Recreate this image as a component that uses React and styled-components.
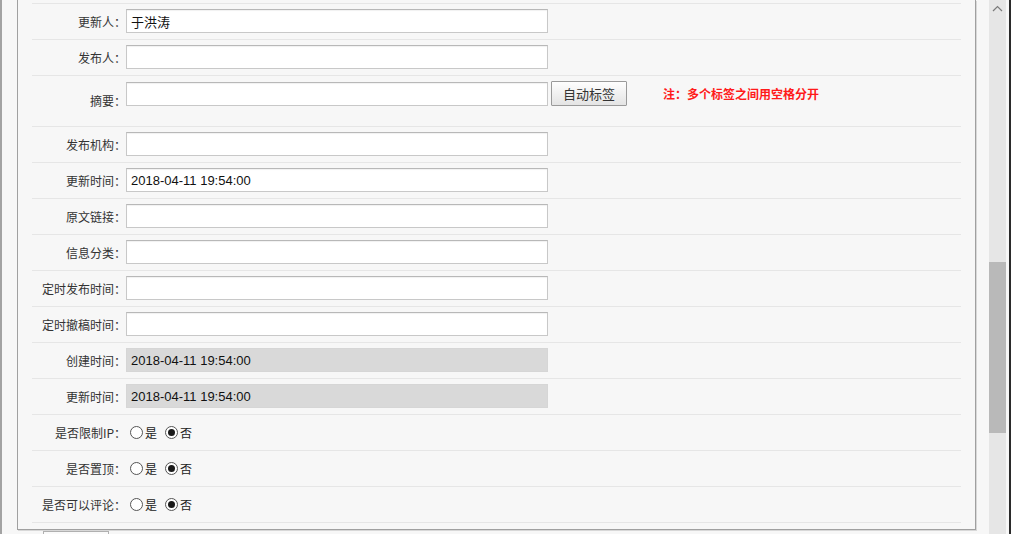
import React from "react";
import styled, { createGlobalStyle } from "styled-components";

const GlobalStyle = createGlobalStyle`
  html, body {
    margin: 0;
    padding: 0;
    background: #f7f7f7;
  }
  * {
    box-sizing: border-box;
  }
`;

const CJK = `"Noto Sans CJK SC", "Liberation Sans", sans-serif`;
const LATIN = `"Liberation Sans", "Noto Sans CJK SC", sans-serif`;

const fields = [
  { label: "更新人：", value: "于洪涛" },
  { label: "发布人：", value: "" },
  { label: "摘要：", type: "summary" },
  { label: "发布机构：", value: "" },
  { label: "更新时间：", value: "2018-04-11 19:54:00" },
  { label: "原文链接：", value: "" },
  { label: "信息分类：", value: "" },
  { label: "定时发布时间：", value: "" },
  { label: "定时撤稿时间：", value: "" },
  { label: "创建时间：", value: "2018-04-11 19:54:00", disabled: true },
  { label: "更新时间：", value: "2018-04-11 19:54:00", disabled: true },
  { label: "是否限制IP：", type: "radio" },
  { label: "是否置顶：", type: "radio" },
  { label: "是否可以评论：", type: "radio" },
];

const App = () => {
  return (
    <>
      <GlobalStyle />
      <Screen>
        <LeftEdge />
        <Main>
          <Panel>
            <FormList>
              {fields.map((f, i) => (
                <Row key={i} $tall={f.type === "summary"}>
                  <Label>{f.label}</Label>
                  {f.type === "summary" ? (
                    <FieldCell $top>
                      <TextInput defaultValue="" />
                      <TagButton type="button">自动标签</TagButton>
                      <Note>注：多个标签之间用空格分开</Note>
                    </FieldCell>
                  ) : f.type === "radio" ? (
                    <FieldCell>
                      <RadioItem>
                        <RadioMark />是
                      </RadioItem>
                      <RadioItem>
                        <RadioMark $checked />否
                      </RadioItem>
                    </FieldCell>
                  ) : (
                    <FieldCell>
                      <TextInput
                        defaultValue={f.value}
                        disabled={f.disabled}
                        $disabled={f.disabled}
                      />
                    </FieldCell>
                  )}
                </Row>
              ))}
            </FormList>
          </Panel>
          <Footer>
            <FooterButton type="button" aria-label="保存" />
          </Footer>
        </Main>
        <ScrollBar>
          <ScrollUp>
            <svg width="11" height="7" viewBox="0 0 11 7">
              <path d="M1 6 L5.5 1.5 L10 6" fill="none" stroke="#7a7a7a" strokeWidth="1.2" />
            </svg>
          </ScrollUp>
          <ScrollThumb />
        </ScrollBar>
        <RightEdge />
      </Screen>
    </>
  );
};

const Screen = styled.div`
  display: flex;
  height: 534px;
  width: 1011px;
  overflow: hidden;
  background: #f7f7f7;
`;

const LeftEdge = styled.div`
  width: 2px;
  flex-shrink: 0;
  background: #a3a3a3;
`;

const Main = styled.div`
  width: 959px;
  flex-shrink: 0;
  margin-left: 15px;
  display: flex;
  flex-direction: column;
`;

const Panel = styled.div`
  background: #f7f7f7;
  border: 1px solid #a0a0a0;
  border-top: none;
  box-shadow: 1px 1px 0 #d8d8d8;
  padding: 3px 14px 6px;
`;

const FormList = styled.div`
  display: flex;
  flex-direction: column;
  border-bottom: 1px solid #e6e6e6;
`;

const Row = styled.div`
  display: flex;
  align-items: center;
  height: ${(p) => (p.$tall ? "51px" : "36px")};
  border-top: 1px solid #e6e6e6;
`;

const Label = styled.div`
  width: 94px;
  flex-shrink: 0;
  margin-top: -1px;
  text-align: right;
  font-family: ${CJK};
  font-size: 12px;
  color: #333;
  white-space: nowrap;
`;

const FieldCell = styled.div`
  display: flex;
  align-items: ${(p) => (p.$top ? "flex-start" : "center")};
  align-self: ${(p) => (p.$top ? "flex-start" : "center")};
  padding-top: ${(p) => (p.$top ? "6px" : "0")};
  margin-top: ${(p) => (p.$top ? "0" : "-1px")};
`;

const TextInput = styled.input`
  width: 422px;
  height: 24px;
  padding: 0 4px;
  border: 1px solid #c8c8c8;
  border-top-color: #b8b8b8;
  box-shadow: inset 0 1px 1px rgba(0, 0, 0, 0.06);
  background: ${(p) => (p.$disabled ? "#d9d9d9" : "#fff")};
  color: #111;
  font-family: ${LATIN};
  font-size: 13px;
  outline: none;
  &:disabled {
    color: #111;
    border-color: #d6d6d6;
    box-shadow: none;
  }
`;

const TagButton = styled.button`
  margin-left: 3px;
  margin-top: -1px;
  width: 76px;
  height: 25px;
  padding: 0;
  border: 1px solid #9a9a9a;
  border-radius: 1px;
  background: linear-gradient(#fefefe, #e4e4e4);
  font-family: ${CJK};
  font-size: 13px;
  color: #333;
`;

const Note = styled.span`
  margin-left: 36px;
  line-height: 24px;
  font-family: ${CJK};
  font-size: 12px;
  font-weight: bold;
  color: #ff1a1a;
`;

const RadioItem = styled.label`
  display: flex;
  align-items: center;
  margin-left: 4px;
  margin-right: 4px;
  font-family: ${CJK};
  font-size: 12px;
  color: #222;
`;

const RadioMark = styled.span`
  width: 13px;
  height: 13px;
  margin-right: 2px;
  border-radius: 50%;
  border: 1px solid #555;
  background: #fff;
  display: flex;
  align-items: center;
  justify-content: center;
  &::after {
    content: "";
    width: 7px;
    height: 7px;
    border-radius: 50%;
    background: ${(p) => (p.$checked ? "#1a1a1a" : "transparent")};
  }
`;

const Footer = styled.div`
  padding: 1px 0 0 26px;
`;

const FooterButton = styled.button`
  width: 66px;
  height: 24px;
  border: 1px solid #b0b0b0;
  background: #fafafa;
`;

const ScrollBar = styled.div`
  width: 17px;
  flex-shrink: 0;
  margin-left: 13px;
  background: #e6e6e6;
  display: flex;
  flex-direction: column;
`;

const ScrollUp = styled.div`
  height: 262px;
  display: flex;
  justify-content: center;
  padding-top: 5px;
`;

const ScrollThumb = styled.div`
  height: 171px;
  background: #b9b9b9;
`;

const RightEdge = styled.div`
  width: 3px;
  flex-shrink: 0;
  margin-left: 3px;
  background: #2b2b2b;
`;

export default App;
